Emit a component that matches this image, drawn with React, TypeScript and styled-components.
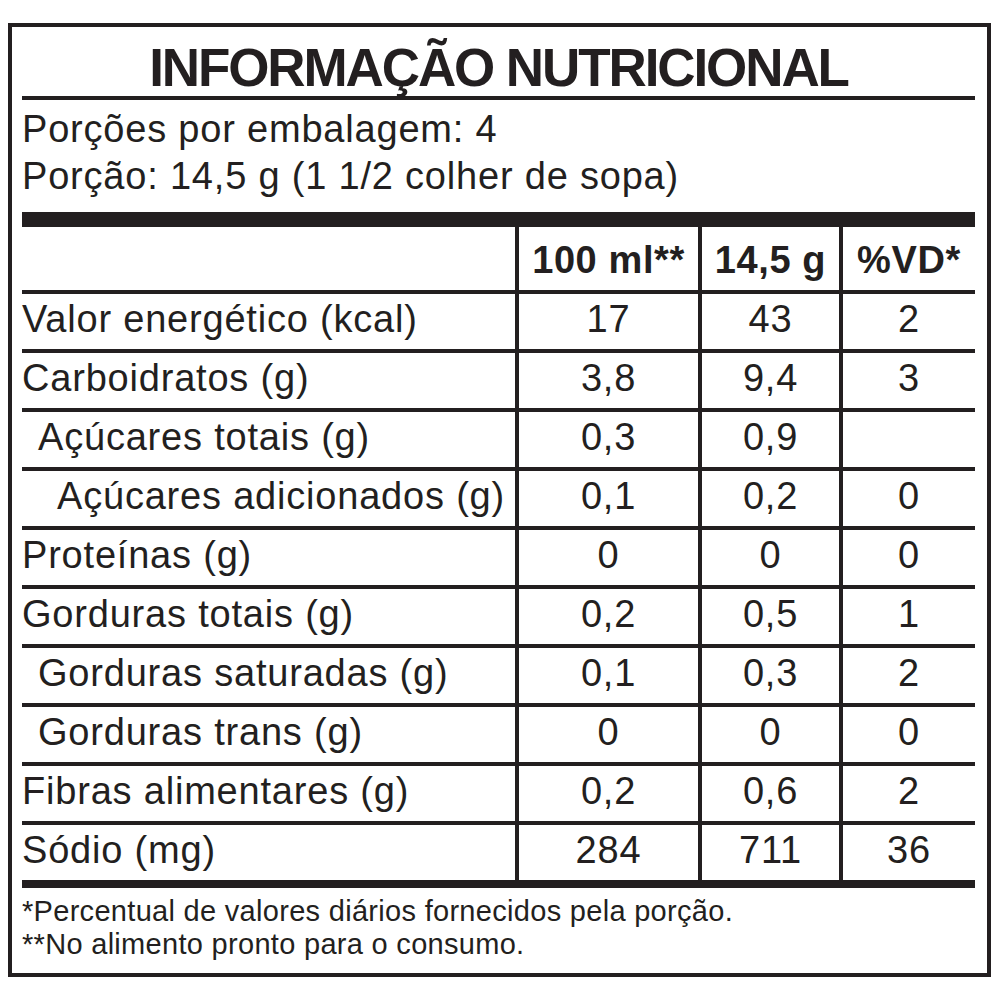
import React from "react";
import styled, { createGlobalStyle } from "styled-components";

const INK = "#231f20";

const GlobalStyle = createGlobalStyle`
  html, body {
    margin: 0;
    padding: 0;
    background: #ffffff;
  }
`;

const Frame = styled.section`
  box-sizing: border-box;
  margin: 23px 0 0 8px;
  width: 983px;
  height: 954px;
  border: 4px solid ${INK};
  padding: 0 12px 0 10px;
  display: flex;
  flex-direction: column;
  color: ${INK};
  font-family: "Liberation Sans", Arial, Helvetica, sans-serif;
`;

const Title = styled.h1`
  margin: 0;
  padding: 15px 0 2px;
  font-size: 53px;
  line-height: 52px;
  font-weight: 700;
  letter-spacing: -2.1px;
  text-align: center;
  border-bottom: 4px solid ${INK};
`;

const Serving = styled.div`
  padding: 6px 0 12px;
  font-size: 38px;
  line-height: 47px;
  letter-spacing: 0.8px;
`;

const ServingLine = styled.div`
  white-space: nowrap;
`;

const Bar = styled.div<{ $h: number }>`
  height: ${(p) => p.$h}px;
  background: ${INK};
  flex: none;
`;

const Row = styled.div<{ $head?: boolean; $last?: boolean }>`
  display: grid;
  grid-template-columns: 493px 183px 141px 1fr;
  height: ${(p) => (p.$head ? 63 : 55)}px;
  border-bottom: ${(p) => (p.$last ? "none" : `4px solid ${INK}`)};
  flex: none;
`;

const Label = styled.div<{ $indent: number }>`
  display: flex;
  align-items: center;
  padding: 0 0 4px ${(p) => [0, 16, 35][p.$indent]}px;
  font-size: 38px;
  letter-spacing: 0.8px;
  white-space: nowrap;
`;

const Value = styled.div<{ $head?: boolean }>`
  box-sizing: border-box;
  display: flex;
  align-items: center;
  justify-content: center;
  border-left: 4px solid ${INK};
  padding: ${(p) => (p.$head ? "3px 0 0" : "0 0 4px")};
  font-size: 38px;
  font-weight: ${(p) => (p.$head ? 700 : 400)};
  letter-spacing: ${(p) => (p.$head ? 0.6 : 0.8)}px;
  white-space: nowrap;
`;

const Notes = styled.div`
  padding-top: 7px;
  font-size: 29px;
  line-height: 33px;
  letter-spacing: 0.3px;
`;

const Note = styled.div`
  white-space: nowrap;
`;

type Item = { label: string; indent: number; values: [string, string, string] };

const items: Item[] = [
  { label: "Valor energético (kcal)", indent: 0, values: ["17", "43", "2"] },
  { label: "Carboidratos (g)", indent: 0, values: ["3,8", "9,4", "3"] },
  { label: "Açúcares totais (g)", indent: 1, values: ["0,3", "0,9", ""] },
  { label: "Açúcares adicionados (g)", indent: 2, values: ["0,1", "0,2", "0"] },
  { label: "Proteínas (g)", indent: 0, values: ["0", "0", "0"] },
  { label: "Gorduras totais (g)", indent: 0, values: ["0,2", "0,5", "1"] },
  { label: "Gorduras saturadas (g)", indent: 1, values: ["0,1", "0,3", "2"] },
  { label: "Gorduras trans (g)", indent: 1, values: ["0", "0", "0"] },
  { label: "Fibras alimentares (g)", indent: 0, values: ["0,2", "0,6", "2"] },
  { label: "Sódio (mg)", indent: 0, values: ["284", "711", "36"] },
];

export default function App() {
  return (
    <>
      <GlobalStyle />
      <Frame>
        <Title>INFORMAÇÃO NUTRICIONAL</Title>
        <Serving>
          <ServingLine>Porções por embalagem: 4</ServingLine>
          <ServingLine>Porção: 14,5 g (1 1/2 colher de sopa)</ServingLine>
        </Serving>
        <Bar $h={15} />
        <Row $head>
          <Label $indent={0} />
          <Value $head>100 ml**</Value>
          <Value $head>14,5 g</Value>
          <Value $head>%VD*</Value>
        </Row>
        {items.map((it, i) => (
          <Row key={it.label} $last={i === items.length - 1}>
            <Label $indent={it.indent}>{it.label}</Label>
            {it.values.map((v, j) => (
              <Value key={j}>{v}</Value>
            ))}
          </Row>
        ))}
        <Bar $h={8} />
        <Notes>
          <Note>*Percentual de valores diários fornecidos pela porção.</Note>
          <Note>**No alimento pronto para o consumo.</Note>
        </Notes>
      </Frame>
    </>
  );
}
